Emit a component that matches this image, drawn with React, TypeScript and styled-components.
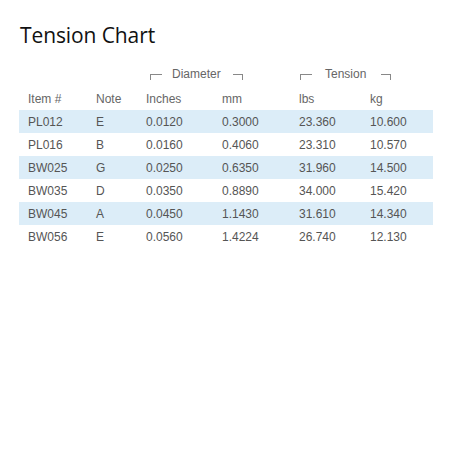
import React from "react";
import styled, { createGlobalStyle } from "styled-components";

const Global = createGlobalStyle`
  html, body { margin: 0; padding: 0; background: #ffffff; }
  body { font-family: "Liberation Sans", Arial, sans-serif; }
`;

const Page = styled.div`
  padding: 19px 18px 0 19px;
  width: 414px;
`;

const Title = styled.h1`
  margin: 0 0 0 1px;
  font-family: "Open Sans", "Segoe UI", sans-serif;
  font-weight: 400;
  font-size: 21px;
  line-height: 32px;
  color: #111;
  letter-spacing: -0.1px;
`;

const Table = styled.table`
  margin-top: 13px;
  width: 414px;
  border-collapse: collapse;
  table-layout: fixed;
  font-size: 12px;
  color: #555;
`;

const Col = styled.col<{ $w: number }>`
  width: ${(p) => p.$w}px;
`;

const Th = styled.th`
  height: 23px;
  padding: 0 0 0 9px;
  text-align: left;
  font-weight: 400;
  color: #666;
  vertical-align: middle;
`;

const GroupTh = styled.th`
  height: 20px;
  padding: 0 0 3px 0;
  text-align: left;
  font-weight: 400;
  color: #666;
  vertical-align: middle;
`;

const Group = styled.div<{ $indent: number }>`
  display: flex;
  align-items: center;
  padding-left: ${(p) => p.$indent}px;
`;

const Bracket = styled.span<{ $side: "left" | "right"; $w: number; $gap: number }>`
  display: inline-block;
  width: ${(p) => p.$w}px;
  height: 5px;
  margin-top: 5px;
  border-top: 1px solid #888;
  ${(p) =>
    p.$side === "left"
      ? `border-left: 1px solid #888; margin-right: ${p.$gap}px;`
      : `border-right: 1px solid #888; margin-left: ${p.$gap}px;`}
`;

const Row = styled.tr<{ $striped: boolean }>`
  background: ${(p) => (p.$striped ? "#dcedf8" : "transparent")};
`;

const Td = styled.td`
  height: 23px;
  padding: 0 0 0 9px;
  vertical-align: middle;
  white-space: nowrap;
`;

const widths = [68, 50, 76, 77, 71, 72];

const rows = [
  ["PL012", "E", "0.0120", "0.3000", "23.360", "10.600"],
  ["PL016", "B", "0.0160", "0.4060", "23.310", "10.570"],
  ["BW025", "G", "0.0250", "0.6350", "31.960", "14.500"],
  ["BW035", "D", "0.0350", "0.8890", "34.000", "15.420"],
  ["BW045", "A", "0.0450", "1.1430", "31.610", "14.340"],
  ["BW056", "E", "0.0560", "1.4224", "26.740", "12.130"],
];

export default function App() {
  return (
    <>
      <Global />
      <Page>
        <Title>Tension Chart</Title>
        <Table>
          <colgroup>
            {widths.map((w, i) => (
              <Col key={i} $w={w} />
            ))}
          </colgroup>
          <thead>
            <tr>
              <GroupTh />
              <GroupTh />
              <GroupTh colSpan={2}>
                <Group $indent={13}>
                  <Bracket $side="left" $w={11} $gap={10} />
                  Diameter
                  <Bracket $side="right" $w={9} $gap={12} />
                </Group>
              </GroupTh>
              <GroupTh colSpan={2}>
                <Group $indent={10}>
                  <Bracket $side="left" $w={11} $gap={13} />
                  Tension
                  <Bracket $side="right" $w={9} $gap={15} />
                </Group>
              </GroupTh>
            </tr>
            <tr>
              <Th>Item #</Th>
              <Th>Note</Th>
              <Th>Inches</Th>
              <Th>mm</Th>
              <Th>lbs</Th>
              <Th>kg</Th>
            </tr>
          </thead>
          <tbody>
            {rows.map((r, i) => (
              <Row key={r[0]} $striped={i % 2 === 0}>
                {r.map((c, j) => (
                  <Td key={j}>{c}</Td>
                ))}
              </Row>
            ))}
          </tbody>
        </Table>
      </Page>
    </>
  );
}
